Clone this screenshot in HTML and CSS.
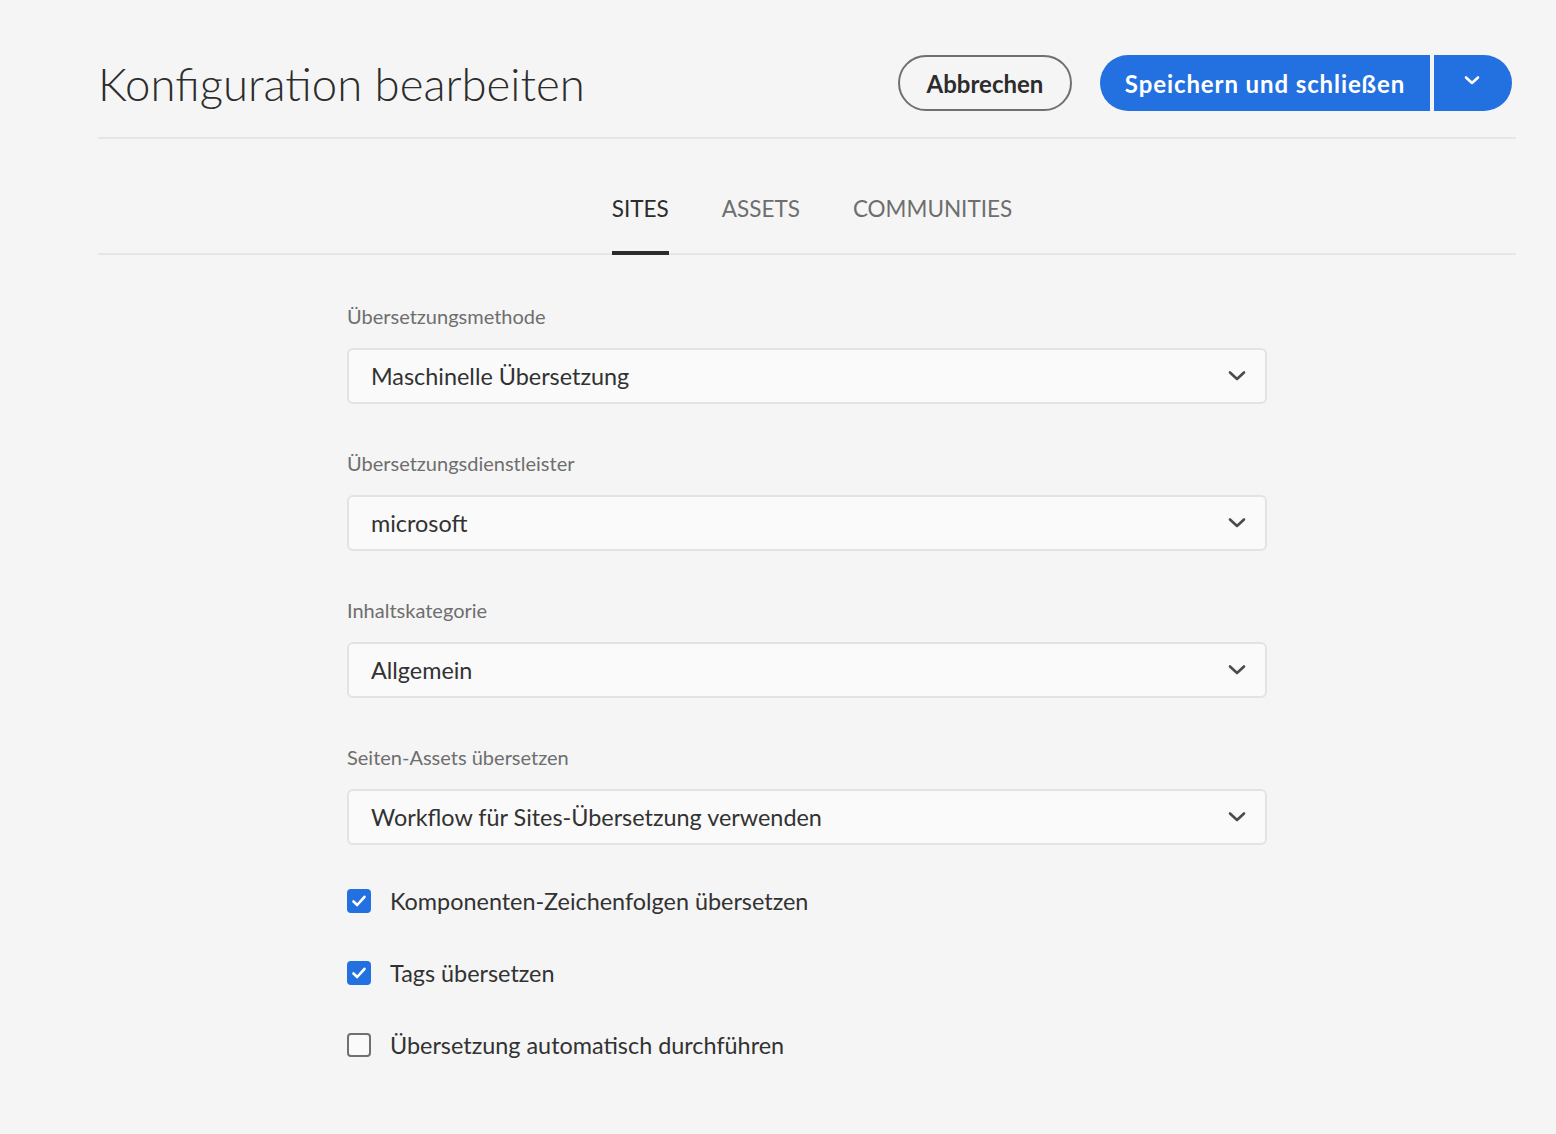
FILE: index.html
```html
<!DOCTYPE html>
<html lang="de">
<head>
<meta charset="utf-8">
<title>Konfiguration bearbeiten</title>
<link rel="stylesheet" href="styles.css">
</head>
<body>
<div class="page">
  <header class="header">
    <h1 class="title">Konfiguration bearbeiten</h1>
    <div class="actions">
      <button class="btn btn-secondary" type="button">Abbrechen</button>
      <div class="split">
        <button class="btn btn-cta split-main" type="button">Speichern und schließen</button>
        <button class="btn btn-cta split-toggle" type="button" aria-label="Weitere Optionen">
          <svg width="18" height="12" viewBox="0 0 18 12"><path d="M3 3.5 L9 9 L15 3.5" fill="none" stroke="#fff" stroke-width="2.6" stroke-linecap="round" stroke-linejoin="round"/></svg>
        </button>
      </div>
    </div>
  </header>

  <nav class="tabs">
    <a class="tab tab-active">SITES</a>
    <a class="tab">ASSETS</a>
    <a class="tab">COMMUNITIES</a>
  </nav>

  <form class="form">
    <div class="field">
      <label class="label">Übersetzungsmethode</label>
      <div class="select"><span>Maschinelle Übersetzung</span>
        <svg class="chev" width="20" height="14" viewBox="0 0 20 14"><path d="M3 3.5 L10 10 L17 3.5" fill="none" stroke="#4b4b4b" stroke-width="2.6" stroke-linecap="round" stroke-linejoin="round"/></svg>
      </div>
    </div>
    <div class="field">
      <label class="label">Übersetzungsdienstleister</label>
      <div class="select"><span>microsoft</span>
        <svg class="chev" width="20" height="14" viewBox="0 0 20 14"><path d="M3 3.5 L10 10 L17 3.5" fill="none" stroke="#4b4b4b" stroke-width="2.6" stroke-linecap="round" stroke-linejoin="round"/></svg>
      </div>
    </div>
    <div class="field">
      <label class="label">Inhaltskategorie</label>
      <div class="select"><span>Allgemein</span>
        <svg class="chev" width="20" height="14" viewBox="0 0 20 14"><path d="M3 3.5 L10 10 L17 3.5" fill="none" stroke="#4b4b4b" stroke-width="2.6" stroke-linecap="round" stroke-linejoin="round"/></svg>
      </div>
    </div>
    <div class="field">
      <label class="label">Seiten-Assets übersetzen</label>
      <div class="select"><span>Workflow für Sites-Übersetzung verwenden</span>
        <svg class="chev" width="20" height="14" viewBox="0 0 20 14"><path d="M3 3.5 L10 10 L17 3.5" fill="none" stroke="#4b4b4b" stroke-width="2.6" stroke-linecap="round" stroke-linejoin="round"/></svg>
      </div>
    </div>

    <div class="checks">
      <div class="check">
        <span class="box box-on"><svg width="16" height="14" viewBox="0 0 16 14"><path d="M2.5 7.5 L6.2 11 L13.5 2.8" fill="none" stroke="#fff" stroke-width="2.6" stroke-linecap="round" stroke-linejoin="round"/></svg></span>
        <span class="check-text">Komponenten-Zeichenfolgen übersetzen</span>
      </div>
      <div class="check">
        <span class="box box-on"><svg width="16" height="14" viewBox="0 0 16 14"><path d="M2.5 7.5 L6.2 11 L13.5 2.8" fill="none" stroke="#fff" stroke-width="2.6" stroke-linecap="round" stroke-linejoin="round"/></svg></span>
        <span class="check-text">Tags übersetzen</span>
      </div>
      <div class="check">
        <span class="box"></span>
        <span class="check-text">Übersetzung automatisch durchführen</span>
      </div>
    </div>
  </form>
</div>
</body>
</html>
```

FILE: styles.css
```css
* { box-sizing: border-box; }

html, body {
  margin: 0;
  padding: 0;
  background: #f5f5f5;
}

body {
  font-family: "Lato", "Open Sans", "Liberation Sans", sans-serif;
  color: #2c2c2c;
}

.page {
  margin: 0 40px 0 98px;
}

.header {
  display: flex;
  align-items: center;
  justify-content: space-between;
  padding: 55px 4px 26px 0;
  border-bottom: 2px solid #e6e6e6;
}

.title {
  margin: 0;
  font-size: 45.5px;
  font-weight: 300;
  color: #2c2c2c;
}

.actions {
  display: flex;
  align-items: center;
  gap: 28px;
}

.btn {
  font-family: inherit;
  height: 56px;
  border-radius: 28px;
  font-size: 24px;
  font-weight: 700;
  cursor: pointer;
}

.btn-secondary {
  width: 174px;
  background: transparent;
  border: 2px solid #707070;
  color: #2c2c2c;
}

.split {
  display: flex;
  gap: 4px;
}

.btn-cta {
  background: #2371e1;
  border: none;
  color: #fff;
}

.split-main {
  width: 330px;
  border-radius: 28px 0 0 28px;
  letter-spacing: 0.9px;
}

.split-toggle {
  width: 78px;
  border-radius: 0 28px 28px 0;
  display: flex;
  align-items: center;
  justify-content: center;
  padding: 0 2px 6px 0;
}

.tabs {
  display: flex;
  justify-content: center;
  gap: 53px;
  border-bottom: 2px solid #e6e6e6;
  padding-left: 10px;
}

.tab {
  display: block;
  padding: 52px 0 24px;
  font-size: 22.5px;
  color: #6e6e6e;
  border-bottom: 4px solid transparent;
  margin-bottom: -2px;
  line-height: 36px;
}

.tab-active {
  color: #2c2c2c;
  border-bottom-color: #2c2c2c;
}

.form {
  width: 920px;
  margin: 0 auto;
  padding: 49px 0 60px;
  display: flex;
  flex-direction: column;
  gap: 47px;
}

.field {
  display: flex;
  flex-direction: column;
  gap: 20px;
}

.label {
  font-size: 20px;
  line-height: 24px;
  color: #6e6e6e;
}

.select {
  height: 56px;
  border: 2px solid #e3e3e3;
  border-radius: 6px;
  background: #fafafa;
  display: flex;
  align-items: center;
  justify-content: space-between;
  padding: 0 18px 0 22px;
  font-size: 23.4px;
  color: #323232;
}

.chev {
  display: block;
}

.checks {
  display: flex;
  flex-direction: column;
  gap: 32px;
  margin-top: -11px;
}

.check {
  display: flex;
  align-items: center;
  height: 40px;
  gap: 19px;
}

.box {
  width: 24px;
  height: 24px;
  border-radius: 4px;
  border: 2px solid #707070;
  background: #fafafa;
  display: flex;
  align-items: center;
  justify-content: center;
}

.box-on {
  background: #2371e1;
  border-color: #2371e1;
}

.check-text {
  font-size: 23.4px;
  color: #323232;
}
```
